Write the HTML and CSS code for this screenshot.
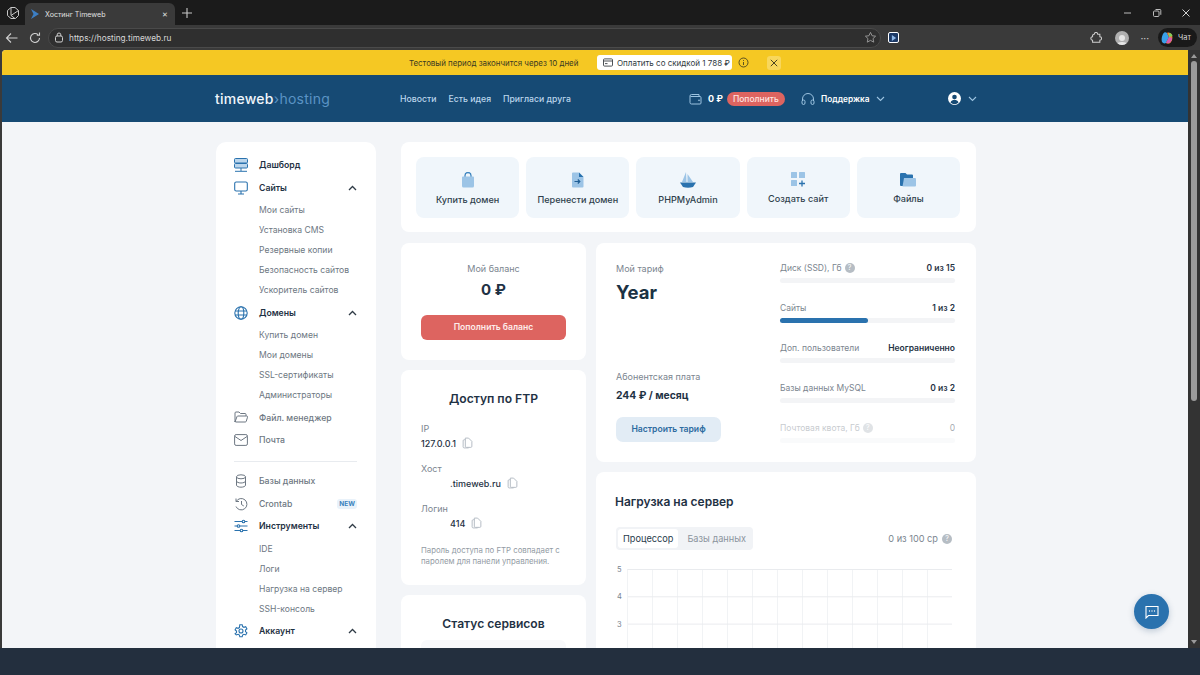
FILE: index.html
```html
<!DOCTYPE html>
<html lang="ru">
<head>
    <meta charset="UTF-8">
    <meta name="viewport" content="width=device-width, initial-scale=1.0">
    <title>Хостинг Timeweb</title>
    <link rel="stylesheet" href="styles.css">
</head>
<body>
<div class="tabbar">
    <svg class="workspace" width="14" height="14" viewBox="0 0 14 14" fill="none" stroke="#c8c8c8" stroke-width="1"><path d="M5 1.500h4l3.500 3v5l-3 3H5L1.500 9.500v-5z"/><path d="M5 1.500v8l4 3M5 9.500l7.500-5"/></svg>
    <div class="tab">
        <svg width="10" height="12" viewBox="0 0 10 12"><path d="M1 1l8 5-8 5 2.500-5z" fill="#3d7fc4"/></svg>
        <span class="tab-title">Хостинг Timeweb</span>
        <span class="tab-close">✕</span>
    </div>
    <svg class="newtab" width="12" height="12" viewBox="0 0 12 12" stroke="#c8c8c8" stroke-width="1.100"><path d="M6 1v10M1 6h10"/></svg>
    <div class="winbtns">
        <svg width="10" height="10" viewBox="0 0 10 10" stroke="#bdbdbd"><path d="M1 5h7"/></svg>
        <svg width="10" height="10" viewBox="0 0 10 10" stroke="#bdbdbd" fill="none"><rect x="1.500" y="3" width="5.500" height="5.500" rx="1"/><path d="M3.500 1.500h4.500a.8.8 0 0 1 .8.8v4.500"/></svg>
        <svg width="10" height="10" viewBox="0 0 10 10" stroke="#d0d0d0"><path d="M1.500 1.500l7 7M8.500 1.500l-7 7"/></svg>
    </div>
</div>
<div class="toolbar">
    <svg class="nav-ic" width="14" height="14" viewBox="0 0 14 14" fill="none" stroke="#d0d0d0" stroke-width="1.100"><path d="M12.500 7h-11M6 2.500L1.500 7 6 11.500"/></svg>
    <svg class="nav-ic" width="14" height="14" viewBox="0 0 14 14" fill="none" stroke="#d0d0d0" stroke-width="1.100"><path d="M11.500 7a4.500 4.500 0 1 1-1.400-3.300M11.500 1.500v2.700H8.800"/></svg>
    <div class="urlbar">
        <svg width="10" height="11" viewBox="0 0 10 11" fill="none" stroke="#cfcfcf"><rect x="1.500" y="4" width="7" height="6" rx="1.500"/><path d="M3.200 4V2.800a1.800 1.800 0 0 1 3.600 0V4"/></svg>
        <span class="url">https://hosting.timeweb.ru</span>
        <svg class="star" width="13" height="13" viewBox="0 0 14 14" fill="none" stroke="#9a9a9a"><path d="M7 1.500l1.700 3.600 3.800.5-2.800 2.600.8 3.800L7 10.100 3.500 12l.8-3.800L1.500 5.600l3.800-.5z"/></svg>
    </div>
    <div class="ext"><svg width="6" height="6" viewBox="0 0 7 7"><path d="M1 0l5 3.500L1 7z" fill="#8fb8e8"/></svg></div>
    <div class="tool-right">
        <svg width="12" height="12" viewBox="0 0 14 14" fill="none" stroke="#cfcfcf" stroke-width="1.200"><path d="M5 2.500a2 2 0 0 1 4 0h2.500v3a2 2 0 0 1 0 4v2.500H3v-2.500a2 2 0 0 1 0-4V3.500z"/></svg>
        <div class="avatar"><svg width="14" height="14" viewBox="0 0 14 14" fill="#e6e6e6"><circle cx="7" cy="5" r="3"/><path d="M1 14c0-4 3-5 6-5s6 1 6 5z"/></svg></div>
        <span class="dots">···</span>
        <div class="chat-pill">
            <svg width="14" height="14" viewBox="0 0 14 14"><path d="M3 3c1-2 3-2 4-1l2 4-3 6c-2 1-3 0-4-1-1-3 0-6 1-8z" fill="#3aa0e8"/><path d="M7 2c2-1 4 0 5 2 1 3 0 6-1 7-1 2-3 2-5 1l3-6z" fill="#e8853a"/><path d="M9 2c2 0 3 1 3.500 3L9 6z" fill="#7fd05a"/><path d="M6 12l3-6 3 1c0 3-2 6-6 5z" fill="#d85ab0"/></svg>
            <span>Чат</span>
        </div>
    </div>
</div>

<div class="viewport">
    <div class="page">
        <div class="banner">
            <span class="banner-text">Тестовый период закончится через 10 дней</span>
            <span class="pay-btn">
                <svg width="10" height="9" viewBox="0 0 10 9" fill="none" stroke="#3a3f45" stroke-width=".9"><rect x=".5" y=".9" width="9" height="7.200" rx="1"/><path d="M.5 3h9M2 5.600h2.500"/></svg>
                Оплатить со скидкой 1 788 ₽
            </span>
            <svg class="banner-info" width="11" height="11" viewBox="0 0 11 11" fill="none" stroke="#4a4320" stroke-width=".9"><circle cx="5.500" cy="5.500" r="4.500"/><path d="M5.500 5v3M5.500 3v.9"/></svg>
            <span class="banner-close"><svg width="8" height="8" viewBox="0 0 8 8" stroke="#4a4320" stroke-width="1"><path d="M.8.8l6.400 6.400M7.200.8L.8 7.200"/></svg></span>
        </div>
        <header class="topbar">
            <div class="logo">timeweb<span class="logo-arrow">›</span><span class="logo-sub">hosting</span></div>
            <nav class="topnav">
                <a>Новости</a>
                <a>Есть идея</a>
                <a>Пригласи друга</a>
            </nav>
            <div class="wallet">
                <svg width="13" height="12" viewBox="0 0 13 12" fill="none" stroke="#9cc3e0"><path d="M1 3a1.500 1.500 0 0 1 1.500-1.500h7.500V3.500M1 3v6.500A1.500 1.500 0 0 0 2.500 11h8.500a1 1 0 0 0 1-1V4.500a1 1 0 0 0-1-1H1.500"/><circle cx="10" cy="7.300" r=".5"/></svg>
                <b>0 ₽</b>
                <span class="topup">Пополнить</span>
            </div>
            <div class="support">
                <svg width="14" height="12" viewBox="0 0 14 12" fill="none" stroke="#9cc3e0"><path d="M1.500 8V6a5.500 5.500 0 0 1 11 0v2"/><rect x="1" y="7" width="3" height="4.500" rx="1.500"/><rect x="10" y="7" width="3" height="4.500" rx="1.500"/></svg>
                <b>Поддержка</b>
                <svg width="9" height="6" viewBox="0 0 9 6" fill="none" stroke="#9cc3e0" stroke-width="1.100"><path d="M1 1l3.500 3.500L8 1"/></svg>
            </div>
            <div class="account">
                <svg width="13" height="13" viewBox="0 0 13 13"><circle cx="6.500" cy="6.500" r="6.500" fill="#fff"/><circle cx="6.500" cy="5" r="2.300" fill="#164a74"/><path d="M2.500 10.500c.6-2 2.300-2.800 4-2.800s3.400.8 4 2.800a5.500 5.500 0 0 1-8 0z" fill="#164a74"/></svg>
                <svg width="9" height="6" viewBox="0 0 9 6" fill="none" stroke="#9cc3e0" stroke-width="1.100"><path d="M1 1l3.500 3.500L8 1"/></svg>
            </div>
        </header>

        <div class="content">
            <aside class="sidebar">
                <div class="nav-item active">
                    <svg width="14" height="14" viewBox="0 0 14 14" fill="#bcd6ec" stroke="#2a72ae" stroke-width="1"><rect x=".5" y=".5" width="13" height="4.500" rx="1"/><rect x=".5" y="5.500" width="13" height="4.500" rx="1"/><path d="M7 10v3M1 13.300h12" fill="none"/></svg>
                    <span>Дашборд</span>
                </div>
                <div class="nav-item active">
                    <svg width="14" height="14" viewBox="0 0 14 14" fill="none" stroke="#2a72ae" stroke-width="1.100"><rect x=".7" y="1" width="12.600" height="9" rx="1.500"/><path d="M7 10v3M4 13h6"/></svg>
                    <span>Сайты</span>
                    <svg class="caret" width="9" height="6" viewBox="0 0 9 6" fill="none" stroke="#2f3b46" stroke-width="1.300"><path d="M1 5l3.500-3.500L8 5"/></svg>
                </div>
                <a class="sub">Мои сайты</a>
                <a class="sub">Установка CMS</a>
                <a class="sub">Резервные копии</a>
                <a class="sub">Безопасность сайтов</a>
                <a class="sub">Ускоритель сайтов</a>
                <div class="nav-item active">
                    <svg width="14" height="14" viewBox="0 0 14 14" fill="none" stroke="#2a72ae" stroke-width="1.100"><circle cx="7" cy="7" r="6.200"/><ellipse cx="7" cy="7" rx="2.800" ry="6.200"/><path d="M1 5h12M1 9h12"/></svg>
                    <span>Домены</span>
                    <svg class="caret" width="9" height="6" viewBox="0 0 9 6" fill="none" stroke="#2f3b46" stroke-width="1.300"><path d="M1 5l3.500-3.500L8 5"/></svg>
                </div>
                <a class="sub">Купить домен</a>
                <a class="sub">Мои домены</a>
                <a class="sub">SSL-сертификаты</a>
                <a class="sub">Администраторы</a>
                <div class="nav-item">
                    <svg width="14" height="13" viewBox="0 0 14 13" fill="none" stroke="#6d7782"><path d="M1 10.500V2a1 1 0 0 1 1-1h3l1.500 1.500H11a1 1 0 0 1 1 1V5"/><path d="M1 11l2-5.500a1 1 0 0 1 1-.5h8.500a1 1 0 0 1 1 1.200l-1.200 4a1 1 0 0 1-1 .8H2a1 1 0 0 1-1-1z"/></svg>
                    <span>Файл. менеджер</span>
                </div>
                <div class="nav-item">
                    <svg width="14" height="12" viewBox="0 0 14 12" fill="none" stroke="#6d7782"><rect x=".6" y=".6" width="12.800" height="10.800" rx="1.500"/><path d="M1 2.500l6 4 6-4"/></svg>
                    <span>Почта</span>
                </div>
                <hr class="divider">
                <div class="nav-item">
                    <svg width="14" height="14" viewBox="0 0 14 14" fill="none" stroke="#6d7782"><ellipse cx="7" cy="2.800" rx="4.500" ry="2"/><path d="M2.500 2.800v8.400c0 1.100 2 2 4.500 2s4.500-.9 4.500-2V2.800M2.500 7c0 1.100 2 2 4.500 2s4.500-.9 4.500-2"/></svg>
                    <span>Базы данных</span>
                </div>
                <div class="nav-item">
                    <svg width="14" height="14" viewBox="0 0 14 14" fill="none" stroke="#6d7782"><path d="M2.200 4.500A5.700 5.700 0 1 1 2 9.500M2 1.500v3h3M7.500 4v3.500l2.300 1.500"/></svg>
                    <span>Crontab</span>
                    <em class="new">NEW</em>
                </div>
                <div class="nav-item active">
                    <svg width="14" height="14" viewBox="0 0 14 14" fill="none" stroke="#2a72ae" stroke-width="1.100"><path d="M.5 2.500h13M.5 7h13M.5 11.500h13"/><circle cx="9.500" cy="2.500" r="1.300" fill="#fff"/><circle cx="4.500" cy="7" r="1.300" fill="#fff"/><circle cx="7.500" cy="11.500" r="1.300" fill="#fff"/></svg>
                    <span>Инструменты</span>
                    <svg class="caret" width="9" height="6" viewBox="0 0 9 6" fill="none" stroke="#2f3b46" stroke-width="1.300"><path d="M1 5l3.500-3.500L8 5"/></svg>
                </div>
                <a class="sub">IDE</a>
                <a class="sub">Логи</a>
                <a class="sub">Нагрузка на сервер</a>
                <a class="sub">SSH-консоль</a>
                <div class="nav-item active">
                    <svg width="14" height="14" viewBox="0 0 14 14" fill="none" stroke="#2a72ae" stroke-width="1.100"><path d="M5.800.8h2.400l.4 1.800 1.300.7 1.800-.6 1.200 2.100-1.400 1.200v1.600l1.400 1.200-1.200 2.100-1.800-.6-1.300.7-.4 1.800H5.800l-.4-1.800-1.300-.7-1.800.6L1.100 9.800l1.400-1.200V7L1.100 5.800l1.200-2.100 1.800.6 1.300-.7z"/><circle cx="7" cy="7" r="2"/></svg>
                    <span>Аккаунт</span>
                    <svg class="caret" width="9" height="6" viewBox="0 0 9 6" fill="none" stroke="#2f3b46" stroke-width="1.300"><path d="M1 5l3.500-3.500L8 5"/></svg>
                </div>
            </aside>

            <main class="main">
                <section class="card quick">
                    <a class="tile">
                        <svg width="14" height="16" viewBox="0 0 14 16"><path d="M4 5V3.500a3 3 0 0 1 6 0V5" fill="none" stroke="#3f86c0" stroke-width="1.300"/><path d="M2 4.500h10a1 1 0 0 1 1 1V14a1.500 1.500 0 0 1-1.500 1.500h-9A1.500 1.500 0 0 1 1 14V5.500a1 1 0 0 1 1-1z" fill="#9cc4e6"/></svg>
                        <span>Купить домен</span>
                    </a>
                    <a class="tile">
                        <svg width="13" height="16" viewBox="0 0 13 16"><path d="M2 .5h6L12.500 5v9.500a1 1 0 0 1-1 1H2a1 1 0 0 1-1-1v-13a1 1 0 0 1 1-1z" fill="#9cc4e6"/><path d="M8 .5L12.500 5H8z" fill="#2a72ae"/><path d="M3.500 9.500h5M6.800 7.500l2 2-2 2" fill="none" stroke="#1f5f96" stroke-width="1.200"/></svg>
                        <span>Перенести домен</span>
                    </a>
                    <a class="tile">
                        <svg width="16" height="16" viewBox="0 0 16 16"><path d="M6 0l.5 10H2z" fill="#9cc4e6"/><path d="M7.500 2l5.500 8H7.500z" fill="#9cc4e6"/><path d="M0 10.500h16L13 15c-3 1-7 1-10 0z" fill="#2a72ae"/></svg>
                        <span>PHPMyAdmin</span>
                    </a>
                    <a class="tile">
                        <svg width="14" height="15" viewBox="0 0 14 15"><rect width="6" height="6" rx=".5" fill="#9cc4e6"/><rect x="8" width="6" height="6" rx=".5" fill="#9cc4e6"/><rect y="8" width="6" height="6" rx=".5" fill="#9cc4e6"/><path d="M11 8.500v6M8 11.500h6" stroke="#2a72ae" stroke-width="1.300"/></svg>
                        <span>Создать сайт</span>
                    </a>
                    <a class="tile">
                        <svg width="16" height="14" viewBox="0 0 16 14"><path d="M1 0h4.500L7 1.500h5a1 1 0 0 1 1 1V13H1a1 1 0 0 1-1-1V1a1 1 0 0 1 1-1z" fill="#2a72ae"/><path d="M4 5h11a1 1 0 0 1 1 1v6.500a1 1 0 0 1-1 1H2.500z" fill="#9cc4e6"/></svg>
                        <span>Файлы</span>
                    </a>
                </section>

                <div class="columns">
                    <div class="col-left">
                        <section class="card balance">
                            <div class="muted">Мой баланс</div>
                            <div class="balance-sum">0 ₽</div>
                            <a class="btn-red">Пополнить баланс</a>
                        </section>
                        <section class="card ftp">
                            <h2 class="ftp-title">Доступ по FTP</h2>
                            <div class="field">
                                <div class="muted">IP</div>
                                <div class="value">127.0.0.1 <svg class="copy" width="11" height="12" viewBox="0 0 10 11" fill="none" stroke="#b5bcc4" stroke-width=".9"><path d="M3 1h3l3 3v4.500a1 1 0 0 1-1 1H4a1 1 0 0 1-1-1zM3 2.500H2a1 1 0 0 0-1 1v5.500a1 1 0 0 0 1 1h4"/></svg></div>
                            </div>
                            <div class="field">
                                <div class="muted">Хост</div>
                                <div class="value hidden-part">.timeweb.ru <svg class="copy" width="11" height="12" viewBox="0 0 10 11" fill="none" stroke="#b5bcc4" stroke-width=".9"><path d="M3 1h3l3 3v4.500a1 1 0 0 1-1 1H4a1 1 0 0 1-1-1zM3 2.500H2a1 1 0 0 0-1 1v5.500a1 1 0 0 0 1 1h4"/></svg></div>
                            </div>
                            <div class="field">
                                <div class="muted">Логин</div>
                                <div class="value hidden-part">414 <svg class="copy" width="11" height="12" viewBox="0 0 10 11" fill="none" stroke="#b5bcc4" stroke-width=".9"><path d="M3 1h3l3 3v4.500a1 1 0 0 1-1 1H4a1 1 0 0 1-1-1zM3 2.500H2a1 1 0 0 0-1 1v5.500a1 1 0 0 0 1 1h4"/></svg></div>
                            </div>
                            <p class="note">Пароль доступа по FTP совпадает с паролем для панели управления.</p>
                        </section>
                        <section class="card status">
                            <h2 class="ftp-title">Статус сервисов</h2>
                            <div class="status-box"></div>
                        </section>
                    </div>
                    <div class="col-right">
                        <section class="card tariff">
                            <div class="tariff-info">
                                <div class="muted">Мой тариф</div>
                                <div class="tariff-name">Year</div>
                                <div class="muted fee-label">Абонентская плата</div>
                                <div class="fee">244 ₽ / месяц</div>
                                <a class="btn-light">Настроить тариф</a>
                            </div>
                            <div class="limits">
                                <div class="limit">
                                    <div class="limit-row"><span>Диск (SSD), Гб <i class="help">?</i></span><b>0 из 15</b></div>
                                    <div class="bar"></div>
                                </div>
                                <div class="limit">
                                    <div class="limit-row"><span>Сайты</span><b>1 из 2</b></div>
                                    <div class="bar"><div class="bar-fill" style="width: 50%"></div></div>
                                </div>
                                <div class="limit">
                                    <div class="limit-row"><span>Доп. пользователи</span><b>Неограниченно</b></div>
                                    <div class="bar"></div>
                                </div>
                                <div class="limit">
                                    <div class="limit-row"><span>Базы данных MySQL</span><b>0 из 2</b></div>
                                    <div class="bar"></div>
                                </div>
                                <div class="limit faded">
                                    <div class="limit-row"><span>Почтовая квота, Гб <i class="help">?</i></span><b>0</b></div>
                                    <div class="bar"></div>
                                </div>
                            </div>
                        </section>
                        <section class="card load">
                            <h2 class="load-title">Нагрузка на сервер</h2>
                            <div class="load-head">
                                <div class="tabs">
                                    <span class="tab-on">Процессор</span>
                                    <span class="tab-off">Базы данных</span>
                                </div>
                                <div class="cp">0 из 100 ср <i class="help">?</i></div>
                            </div>
                            <div class="chart">
                                <div class="y-axis"><span>5</span><span>4</span><span>3</span></div>
                                <div class="grid"></div>
                            </div>
                        </section>
                    </div>
                </div>
            </main>
        </div>
        <button class="fab">
            <svg width="14" height="14" viewBox="0 0 14 14" fill="none" stroke="#fff" stroke-width="1.100"><path d="M1 1.500h12v9H3.500L1 13z"/><path d="M4.500 6h.01M7 6h.01M9.500 6h.01" stroke-width="1.300" stroke-linecap="round"/></svg>
        </button>
    </div>
    <div class="scrollbar">
        <span class="arrow-up"></span>
        <div class="thumb"></div>
        <span class="arrow-down"></span>
    </div>
</div>
<div class="taskbar"></div>
</body>
</html>
```

FILE: styles.css
```css
* {
    box-sizing: border-box;
}
html, body {
    margin: 0;
    height: 100%;
}
body {
    width: 1200px;
    height: 675px;
    overflow: hidden;
    display: flex;
    flex-direction: column;
    background: #232f3e;
    font-family: Inter, "Noto Sans", sans-serif;
    color: #1f3244;
}
h2, p {
    margin: 0;
}

/* browser chrome */
.tabbar {
    height: 25px;
    flex: none;
    display: flex;
    align-items: center;
    background: #1b1b1b;
    color: #e0e0e0;
}
.workspace {
    margin-left: 6px;
}
.tab {
    width: 150px;
    height: 22px;
    margin: 3px 0 0 5px;
    padding: 0 7px 0 5px;
    display: flex;
    align-items: center;
    gap: 5px;
    background: #3a3a3a;
    border-radius: 6px 6px 0 0;
}
.tab-title {
    font-size: 7.100px;
    flex: 1;
}
.tab-close {
    font-size: 7px;
}
.newtab {
    margin-left: 6px;
}
.winbtns {
    margin-left: auto;
    margin-right: 9px;
    display: flex;
    gap: 19px;
}
.toolbar {
    height: 25px;
    flex: none;
    display: flex;
    align-items: center;
    background: #3a3a3a;
}
.nav-ic {
    margin-left: 6px;
    margin-right: 2px;
}
.nav-ic:first-child {
    margin-left: 5px;
    margin-right: 3px;
}
.urlbar {
    width: 833px;
    height: 20px;
    margin-left: 4px;
    padding: 0 3px 0 5px;
    display: flex;
    align-items: center;
    gap: 5px;
    background: #2f2f2f;
    border: 1px solid #4a4a4a;
    border-radius: 10px;
}
.url {
    font-size: 8.250px;
    color: #d6d6d6;
    flex: 1;
}
.ext {
    width: 11px;
    height: 11px;
    margin-left: 7px;
    display: flex;
    align-items: center;
    justify-content: center;
    background: #1d3a66;
    border: 1px solid #fff;
    border-radius: 2px;
}
.tool-right {
    margin-left: auto;
    margin-right: 3px;
    display: flex;
    align-items: center;
}
.avatar {
    width: 14px;
    height: 14px;
    margin-left: 13px;
    overflow: hidden;
    border-radius: 50%;
    background: #b0b0b0;
}
.dots {
    margin-left: 11px;
    margin-right: 9px;
    font-size: 10px;
    color: #d0d0d0;
}
.chat-pill {
    height: 19px;
    padding: 0 6px 0 2px;
    display: flex;
    align-items: center;
    gap: 4px;
    background: #191919;
    border-radius: 10px;
    font-size: 7.500px;
    color: #d6d6d6;
}

/* page */
.viewport {
    height: 598px;
    flex: none;
    display: flex;
    background: #3a3a3a;
    padding-left: 2px;
}
.page {
    position: relative;
    flex: 1;
    overflow: hidden;
    background: #f3f5f8;
    border-radius: 4px 0 0 0;
}
.scrollbar {
    width: 12px;
    flex: none;
    display: flex;
    flex-direction: column;
    align-items: center;
    padding-top: 4px;
    background: #333;
}
.arrow-up {
    border: 3px solid transparent;
    border-top: 0;
    border-bottom: 4px solid #9a9a9a;
}
.thumb {
    width: 6px;
    height: 340px;
    margin-top: 3px;
    background: #9b9b9b;
    border-radius: 3px;
}
.arrow-down {
    margin-top: auto;
    margin-bottom: 4px;
    border: 3px solid transparent;
    border-bottom: 0;
    border-top: 4px solid #9a9a9a;
}
.taskbar {
    flex: 1;
    background: #232f3e;
}

.banner {
    height: 25px;
    display: flex;
    align-items: center;
    background: #f5c823;
    padding-left: 407px;
}
.banner-text {
    font-size: 7.900px;
    color: #3b3a22;
    width: 188px;
}
.pay-btn {
    width: 135px;
    height: 15px;
    display: flex;
    align-items: center;
    gap: 4px;
    padding-left: 6px;
    background: #fff;
    border-radius: 3px;
    font-size: 8px;
    color: #2f3a42;
    white-space: nowrap;
}
.banner-info {
    margin-left: 6px;
}
.banner-close {
    width: 14px;
    height: 14px;
    margin-left: 18px;
    display: flex;
    align-items: center;
    justify-content: center;
    background: #f8d75c;
    border-radius: 3px;
}

.topbar {
    height: 47px;
    display: flex;
    align-items: center;
    padding-left: 213px;
    background: #164a74;
    color: #fff;
}
.logo {
    width: 185px;
    font-size: 14px;
    font-weight: 500;
    letter-spacing: .25px;
    color: #eef5fb;
}
.logo-arrow, .logo-sub {
    color: #5b93c4;
    font-weight: 400;
}
.topnav {
    display: flex;
    gap: 12px;
    width: 289px;
    font-size: 8.700px;
    font-weight: 500;
    color: #bcd6ec;
}
.wallet {
    display: flex;
    align-items: center;
    gap: 6px;
    width: 112px;
    font-size: 9px;
}
.topup {
    margin-left: -2px;
    padding: 2px 6px;
    background: #dd6460;
    border-radius: 7px;
    font-size: 8.500px;
    font-weight: 500;
    color: #fde4e2;
}
.support {
    display: flex;
    align-items: center;
    gap: 6px;
    width: 147px;
    font-size: 8.300px;
}
.support b {
    font-weight: 600;
}
.account {
    display: flex;
    align-items: center;
    gap: 7px;
}

.content {
    display: flex;
    gap: 25px;
    padding: 20px 0 0 214px;
}
.sidebar {
    width: 160px;
    height: 520px;
    flex: none;
    padding: 12px 19px 0 18px;
    background: #fff;
    border-radius: 10px;
}
.nav-item {
    height: 22.500px;
    display: flex;
    align-items: center;
    font-size: 8.700px;
    font-weight: 500;
    color: #6d7782;
}
.nav-item > svg:first-child {
    width: 14px;
    margin-right: 11px;
    flex: none;
}
.nav-item.active {
    color: #1f3244;
    font-weight: 600;
}
.caret {
    margin-left: auto;
}
.sub {
    display: flex;
    align-items: center;
    height: 20px;
    padding-left: 25px;
    font-size: 8.600px;
    color: #6d7782;
}
.nav-item + .sub {
    margin-top: 1.250px;
}
.sub + .nav-item {
    margin-top: 1.250px;
}
.divider {
    height: 1px;
    margin: 9px 0 8.500px 0;
    border: 0;
    background: #e8ebef;
}
.new {
    margin-left: auto;
    padding: 1px 2px;
    background: #e9f2fa;
    border-radius: 3px;
    font-size: 6.500px;
    font-weight: 700;
    font-style: normal;
    color: #3b83bd;
}

.main {
    width: 575px;
    flex: none;
}
.card {
    background: #fff;
    border-radius: 8px;
}
.quick {
    height: 90px;
    display: grid;
    grid-template-columns: repeat(5, 1fr);
    gap: 7px;
    padding: 15px 16px 14px 15px;
}
.tile {
    display: flex;
    flex-direction: column;
    align-items: center;
    justify-content: center;
    gap: 6px;
    padding-top: 1px;
    background: #f0f6fb;
    border-radius: 8px;
    font-size: 9.100px;
    font-weight: 500;
    color: #2f3f4c;
}
.columns {
    display: flex;
    gap: 10px;
    margin-top: 11px;
}
.col-left {
    width: 185px;
    flex: none;
    display: flex;
    flex-direction: column;
    gap: 10px;
}
.col-right {
    width: 380px;
    flex: none;
    display: flex;
    flex-direction: column;
    gap: 10px;
}
.muted {
    font-size: 9px;
    color: #7b858f;
}
.balance {
    height: 117px;
    padding-top: 20px;
    text-align: center;
}
.balance-sum {
    margin-top: 6px;
    font-size: 15px;
    font-weight: 700;
}
.btn-red {
    display: block;
    height: 25px;
    margin: 16px 20px 0;
    line-height: 25px;
    background: #dd6460;
    border-radius: 6px;
    font-size: 8.600px;
    font-weight: 600;
    color: #fdeceb;
}
.ftp {
    height: 215px;
    padding: 21px 20px 0;
}
.ftp-title {
    text-align: center;
    font-size: 12.100px;
    font-weight: 600;
    color: #1f3244;
}
.field {
    margin-top: 14px;
}
.ftp-title + .field {
    margin-top: 17px;
}
.value {
    margin-top: 3px;
    display: flex;
    align-items: center;
    gap: 6px;
    font-size: 9px;
    font-weight: 500;
    color: #1f3244;
}
.hidden-part {
    padding-left: 29px;
}
.note {
    margin-top: 16px;
    font-size: 7.800px;
    line-height: 11px;
    color: #939ba4;
}
.status {
    height: 120px;
    padding: 21px 20px 0;
}
.status-box {
    height: 40px;
    margin-top: 9px;
    background: #f8f9fb;
    border-radius: 6px;
}

.tariff {
    height: 219px;
    display: flex;
    padding: 20px 21px 0 20px;
}
.tariff-info {
    width: 164px;
    flex: none;
}
.tariff-name {
    margin-top: 7px;
    font-size: 18.500px;
    font-weight: 700;
    color: #1c3244;
}
.fee-label {
    margin-top: 68px;
}
.fee {
    margin-top: 7px;
    font-size: 10.300px;
    font-weight: 700;
}
.btn-light {
    display: block;
    width: 105px;
    height: 25px;
    margin-top: 16px;
    line-height: 25px;
    text-align: center;
    background: #e2ecf5;
    border-radius: 7px;
    font-size: 8.600px;
    font-weight: 600;
    color: #2d6ba0;
}
.limits {
    flex: 1;
    margin-top: -1px;
}
.limit {
    height: 40px;
}
.limit-row {
    display: flex;
    justify-content: space-between;
    align-items: center;
    height: 12px;
    font-size: 8.500px;
    color: #7b858f;
}
.limit-row span {
    display: flex;
    align-items: center;
    gap: 3px;
}
.limit-row b {
    font-weight: 600;
    color: #1f3244;
}
.help {
    width: 10px;
    height: 10px;
    display: inline-block;
    border-radius: 50%;
    background: #b6bdc4;
    color: #fff;
    font-size: 7px;
    font-style: normal;
    line-height: 10px;
    text-align: center;
}
.bar {
    height: 5px;
    margin-top: 4px;
    background: #f3f4f6;
    border-radius: 3px;
}
.bar-fill {
    height: 100%;
    background: #2a72ae;
    border-radius: 3px;
}
.faded {
    opacity: .42;
}
.faded b {
    font-weight: 400;
}

.load {
    height: 300px;
    padding: 22px 24px 0 19px;
}
.load-title {
    font-size: 12px;
    font-weight: 600;
    color: #1f3244;
}
.load-head {
    margin-top: 18px;
    display: flex;
    justify-content: space-between;
    align-items: center;
}
.tabs {
    height: 23px;
    margin-left: 1px;
    display: flex;
    align-items: center;
    padding: 2px;
    background: #f1f3f6;
    border-radius: 4px;
    font-size: 9.200px;
}
.tab-on {
    height: 19px;
    padding: 0 5px;
    line-height: 19px;
    background: #fff;
    border-radius: 3px;
    color: #2a3c4c;
}
.tab-off {
    padding: 0 5px 0 9px;
    color: #8b949d;
}
.cp {
    display: flex;
    align-items: center;
    gap: 4px;
    font-size: 9.200px;
    color: #7b858f;
}
.chart {
    margin-top: 19px;
    display: flex;
}
.y-axis {
    width: 12px;
    flex: none;
    display: flex;
    flex-direction: column;
    gap: 16.300px;
    margin-top: -5px;
    padding-left: 2px;
    font-size: 7.500px;
    line-height: 11px;
    color: #7b858f;
}
.y-axis span {
    height: 11px;
}
.grid {
    flex: 1;
    height: 120px;
    border-top: 1px solid #e9ebee;
    border-left: 1px solid #f1f3f5;
    background-image:
        linear-gradient(to bottom, transparent 26.300px, #e9ebee 26.300px, #e9ebee 27.300px, transparent 27.300px),
        linear-gradient(to right, transparent 24px, #f1f3f5 24px, #f1f3f5 25px, transparent 25px);
    background-size: 100% 27.300px, 25px 100%;
}

.fab {
    position: absolute;
    right: 19px;
    top: 544px;
    width: 35px;
    height: 35px;
    display: flex;
    align-items: center;
    justify-content: center;
    padding: 0;
    border: 0;
    border-radius: 50%;
    background: #2a72ae;
    box-shadow: 0 2px 6px rgba(30, 70, 110, .25);
}
```
